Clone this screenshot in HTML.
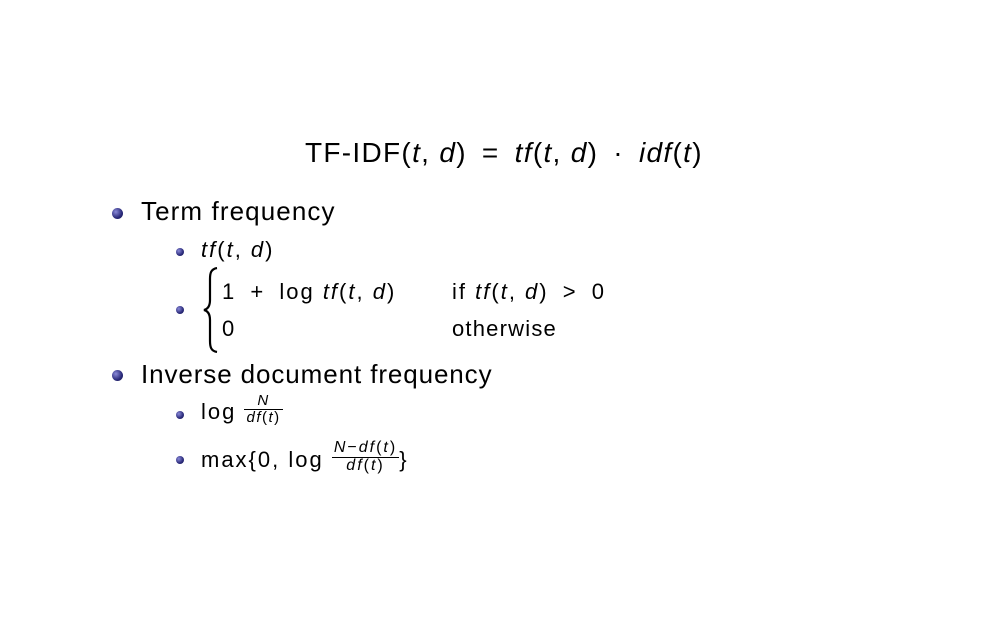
<!DOCTYPE html>
<html><head><meta charset="utf-8"><style>
body{margin:0;width:1008px;height:617px;background:#fff;position:relative;overflow:hidden;font-family:"Liberation Sans",sans-serif;color:#000}
.t{position:absolute;white-space:nowrap;line-height:1}
i{font-style:italic}
.m{letter-spacing:2px}
.sp{display:inline-block;width:6px}
.b{position:absolute;border-radius:50%;background:radial-gradient(circle at 35% 35%,#8a8ad8,#2a2a7a 60%,#14144a)}
.fr{display:inline-block;vertical-align:middle;text-align:center;font-size:15px;line-height:1.05;position:relative;top:-4px;letter-spacing:1.5px}
.fr span{display:block;padding:0 2px}
.fr .n{border-bottom:1px solid #000}
</style></head><body>
<div class="t m" style="left:305px;top:139px;font-size:28px;letter-spacing:1.3px">TF-IDF(<i>t</i>, <i>d</i>)<span class="sp"></span> = <span class="sp"></span><i>tf</i>(<i>t</i>, <i>d</i>)<span class="sp"></span> · <span class="sp"></span><i>idf</i>(<i>t</i>)</div>

<div class="b" style="left:112px;top:208px;width:11px;height:11px"></div>
<div class="t" style="left:141px;top:198px;font-size:26px;letter-spacing:1.1px">Term frequency</div>

<div class="b" style="left:176px;top:248px;width:8px;height:8px"></div>
<div class="t m" style="left:201px;top:239px;font-size:22px"><i>tf</i>(<i>t</i>, <i>d</i>)</div>

<div class="b" style="left:176px;top:306px;width:8px;height:8px"></div>
<svg style="position:absolute;left:203px;top:267px" width="16" height="86" viewBox="0 0 16 86"><path d="M14 1 C8 2 7 6 7 12 L7 33 C7 39 5 42 1 43 C5 44 7 47 7 53 L7 74 C7 80 8 84 14 85" fill="none" stroke="#000" stroke-width="2.2"/></svg>
<div class="t m" style="left:222px;top:281px;font-size:22px">1<span class="sp"></span> + <span class="sp"></span>log <i>tf</i>(<i>t</i>, <i>d</i>)</div>
<div class="t m" style="left:452px;top:281px;font-size:22px">if <i>tf</i>(<i>t</i>, <i>d</i>)<span class="sp"></span> &gt; <span class="sp"></span>0</div>
<div class="t" style="left:222px;top:318px;font-size:22px">0</div>
<div class="t" style="left:452px;top:318px;font-size:22px;letter-spacing:1.2px">otherwise</div>

<div class="b" style="left:112px;top:370px;width:11px;height:11px"></div>
<div class="t" style="left:141px;top:361px;font-size:26px;letter-spacing:0.9px">Inverse document frequency</div>

<div class="b" style="left:176px;top:411px;width:8px;height:8px"></div>
<div class="t m" style="left:201px;top:397px;font-size:22px">log <span class="fr"><span class="n"><i>N</i></span><span><i>df</i>(<i>t</i>)</span></span></div>

<div class="b" style="left:176px;top:456px;width:8px;height:8px"></div>
<div class="t m" style="left:201px;top:444px;font-size:22px">max{0, log <span class="fr" style="font-size:16px;letter-spacing:2px"><span class="n"><i>N</i>−<i>df</i>(<i>t</i>)</span><span><i>df</i>(<i>t</i>)</span></span>}</div>
</body></html>
